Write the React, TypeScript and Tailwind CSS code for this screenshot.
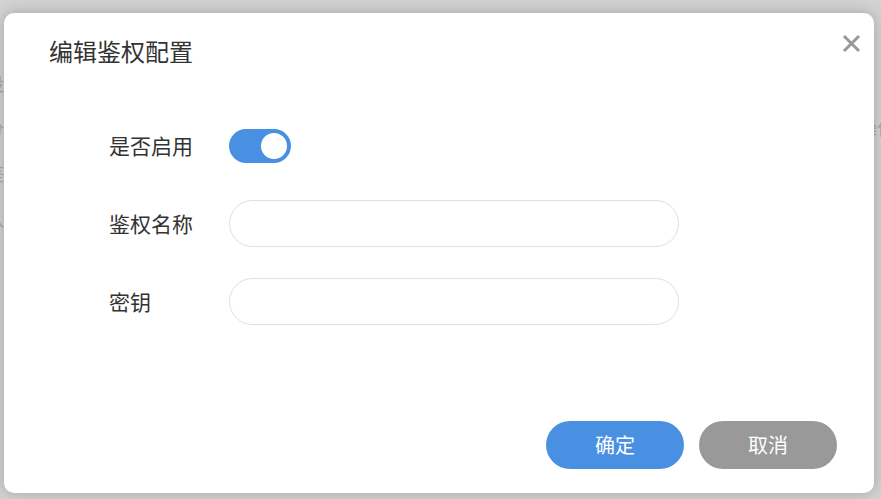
import React from "react";

const font = { fontFamily: '"Noto Sans CJK SC", "Noto Sans", sans-serif' };

export default function App() {
  return (
    <div className="relative w-[881px] h-[499px] overflow-hidden bg-[#d2d2d2]" style={font}>
      {/* background page (dimmed) */}
      <div className="flex justify-between -mx-[14px] pt-[70px]">
        <div className="flex flex-col gap-[18px] text-[18px] text-[#a8a8a8]">
          <span>设置</span>
          <span>分组</span>
          <span>鉴权</span>
          <span>认证</span>
        </div>
        <div className="flex flex-col pt-[44px] text-[18px] text-[#a8a8a8]">
          <span>操作</span>
        </div>
      </div>
      {/* dialog */}
      <div className="absolute left-[4px] top-[13px] w-[870px] h-[480px] rounded-[10px] bg-white shadow-[0_0_14px_rgba(0,0,0,0.22)] flex flex-col">
        <div className="flex items-center justify-between pl-[45px] pr-[13px] pt-[21px]">
          <h2 className="text-[24px] leading-[34px] text-[#333]">编辑鉴权配置</h2>
          <button className="w-[20px] h-[20px] -mt-[16px] flex items-center justify-center">
            <svg width="19" height="19" viewBox="0 0 19 19">
              <path d="M2 2 L17 17 M17 2 L2 17" stroke="#999" strokeWidth="3" strokeLinecap="butt" />
            </svg>
          </button>
        </div>
        <div className="flex flex-col gap-[31px] pl-[105px] pt-[54px]">
          <div className="flex items-center h-[47px]">
            <span className="w-[120px] text-[21px] text-[#333]">是否启用</span>
            <div className="w-[62px] h-[34px] rounded-full bg-[#4a90e2] flex items-center justify-end pr-[4px]">
              <div className="w-[26px] h-[26px] rounded-full bg-white" />
            </div>
          </div>
          <div className="flex items-center h-[47px]">
            <span className="w-[120px] text-[21px] text-[#333]">鉴权名称</span>
            <input className="w-[450px] h-[47px] rounded-full border border-[#dcdfe6] outline-none px-[18px] text-[18px]" />
          </div>
          <div className="flex items-center h-[47px]">
            <span className="w-[120px] text-[21px] text-[#333]">密钥</span>
            <input className="w-[450px] h-[47px] rounded-full border border-[#dcdfe6] outline-none px-[18px] text-[18px]" />
          </div>
        </div>
        <div className="mt-auto flex justify-end gap-[15px] pr-[37px] pb-[24px]">
          <button className="w-[138px] h-[48px] rounded-full bg-[#4a90e2] text-white text-[20px]">确定</button>
          <button className="w-[138px] h-[48px] rounded-full bg-[#999999] text-white text-[20px]">取消</button>
        </div>
      </div>
    </div>
  );
}
